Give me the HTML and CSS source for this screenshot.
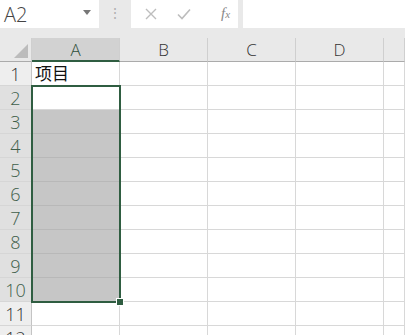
FILE: index.html
```html
<!DOCTYPE html>
<html lang="zh">
<head>
  <meta charset="UTF-8" />
  <title>Sheet</title>
  <link rel="stylesheet" href="styles.css">
</head>
<body>
  <div class="formula-bar">
    <div class="name-box">
      <span>A2</span>
      <svg class="drop" width="8" height="5" viewBox="0 0 8 5"><path d="M0 0h8L4 5z" fill="#777"/></svg>
    </div>
    <div class="grip">⋮</div>
    <div class="buttons">
      <svg width="12" height="12" viewBox="0 0 12 12"><path d="M1 1l10 10M11 1L1 11" stroke="#bdbdbd" stroke-width="1.4" fill="none"/></svg>
      <svg width="14" height="12" viewBox="0 0 14 12"><path d="M1 6.5l4 4L13 1.5" stroke="#bdbdbd" stroke-width="1.6" fill="none"/></svg>
      <span class="fx">f<span class="x">x</span></span>
    </div>
    <div class="input"></div>
  </div>

  <div class="sheet">
    <div class="corner"><svg width="14" height="14" viewBox="0 0 14 14"><path d="M14 0v14H0z" fill="#bcbcbc"/></svg></div>
    <div class="col-head active">A</div>
    <div class="col-head">B</div>
    <div class="col-head">C</div>
    <div class="col-head">D</div>
    <div class="col-head"></div>

    <div class="row-head">1</div>
    <div class="cell text">项目</div><div class="cell"></div><div class="cell"></div><div class="cell"></div><div class="cell"></div>

    <div class="row-head sel">2</div>
    <div class="cell"></div><div class="cell"></div><div class="cell"></div><div class="cell"></div><div class="cell"></div>
    <div class="row-head sel">3</div>
    <div class="cell fill"></div><div class="cell"></div><div class="cell"></div><div class="cell"></div><div class="cell"></div>
    <div class="row-head sel">4</div>
    <div class="cell fill"></div><div class="cell"></div><div class="cell"></div><div class="cell"></div><div class="cell"></div>
    <div class="row-head sel">5</div>
    <div class="cell fill"></div><div class="cell"></div><div class="cell"></div><div class="cell"></div><div class="cell"></div>
    <div class="row-head sel">6</div>
    <div class="cell fill"></div><div class="cell"></div><div class="cell"></div><div class="cell"></div><div class="cell"></div>
    <div class="row-head sel">7</div>
    <div class="cell fill"></div><div class="cell"></div><div class="cell"></div><div class="cell"></div><div class="cell"></div>
    <div class="row-head sel">8</div>
    <div class="cell fill"></div><div class="cell"></div><div class="cell"></div><div class="cell"></div><div class="cell"></div>
    <div class="row-head sel">9</div>
    <div class="cell fill"></div><div class="cell"></div><div class="cell"></div><div class="cell"></div><div class="cell"></div>
    <div class="row-head sel">10</div>
    <div class="cell fill"></div><div class="cell"></div><div class="cell"></div><div class="cell"></div><div class="cell"></div>
    <div class="row-head">11</div>
    <div class="cell"></div><div class="cell"></div><div class="cell"></div><div class="cell"></div><div class="cell"></div>
    <div class="row-head">12</div>
    <div class="cell"></div><div class="cell"></div><div class="cell"></div><div class="cell"></div><div class="cell"></div>

    <div class="selection"><div class="handle"></div></div>
  </div>
</body>
</html>
```

FILE: styles.css
```css
body {
  margin: 0;
  width: 405px;
  height: 335px;
  overflow: hidden;
  background: #e9e9e9;
  font-family: "Open Sans", "Noto Sans", sans-serif;
}
.formula-bar {
  display: flex;
  height: 28px;
  margin-bottom: 10px;
}
.name-box {
  width: 99px;
  background: #fff;
  display: flex;
  align-items: center;
  justify-content: space-between;
  padding: 0 8px 0 4px;
  box-sizing: border-box;
  color: #444;
  font-size: 20px;
  font-weight: 300;
}
.drop {
  margin-top: -4px;
}
.grip {
  width: 32px;
  text-align: center;
  color: #b0b0b0;
  font-size: 14px;
  line-height: 26px;
}
.buttons {
  width: 107px;
  background: #fff;
  display: flex;
  align-items: center;
  gap: 20px;
  padding-left: 14px;
  box-sizing: border-box;
}
.fx {
  font-family: "Liberation Serif", serif;
  font-style: italic;
  color: #888;
  font-size: 15px;
  margin-left: 10px;
  margin-top: -2px;
}
.fx .x {
  font-size: 11px;
}
.input {
  flex: 1;
  margin-left: 5px;
  background: #fff;
}
.sheet {
  position: relative;
  display: grid;
  grid-template-columns: 32px 88px 88px 88px 88px 1fr;
  grid-auto-rows: 24px;
  background: #fff;
}
.corner {
  background: #e9e9e9;
  border-right: 1px solid #cfcfcf;
  border-bottom: 1px solid #ababab;
  box-sizing: border-box;
  display: flex;
  align-items: flex-end;
  justify-content: flex-end;
  padding: 0 3px 3px 0;
}
.col-head {
  background: #e9e9e9;
  border-right: 1px solid #cfcfcf;
  border-bottom: 1px solid #ababab;
  box-sizing: border-box;
  text-align: center;
  line-height: 23px;
  font-size: 17px;
  font-weight: 300;
  color: #333;
}
.col-head.active {
  background: #d2d2d2;
  border-bottom: 2px solid #2f5d41;
  color: #2f4f3a;
}
.row-head {
  background: #eeeeee;
  border-bottom: 1px solid #d6d6d6;
  border-right: 1px solid #c4c4c4;
  box-sizing: border-box;
  text-align: center;
  line-height: 24px;
  font-size: 18px;
  font-weight: 300;
  color: #333;
}
.row-head.sel {
  background: #e0e0e0;
  color: #3e5e4a;
}
.cell {
  border-right: 1px solid #d8d8d8;
  border-bottom: 1px solid #d8d8d8;
  box-sizing: border-box;
}
.cell.fill {
  background: #c6c6c6;
  border-bottom-color: #b8b8b8;
}
.cell.text {
  font-family: "Noto Sans CJK SC", sans-serif;
  font-size: 17px;
  line-height: 22px;
  padding-left: 3px;
  color: #111;
}
.selection {
  position: absolute;
  left: 31px;
  top: 47px;
  width: 90px;
  height: 218px;
  border: 2px solid #2f5d41;
  box-sizing: border-box;
}
.handle {
  position: absolute;
  right: -5px;
  bottom: -5px;
  width: 6px;
  height: 6px;
  background: #2f5d41;
  border: 1px solid #fff;
}
```
